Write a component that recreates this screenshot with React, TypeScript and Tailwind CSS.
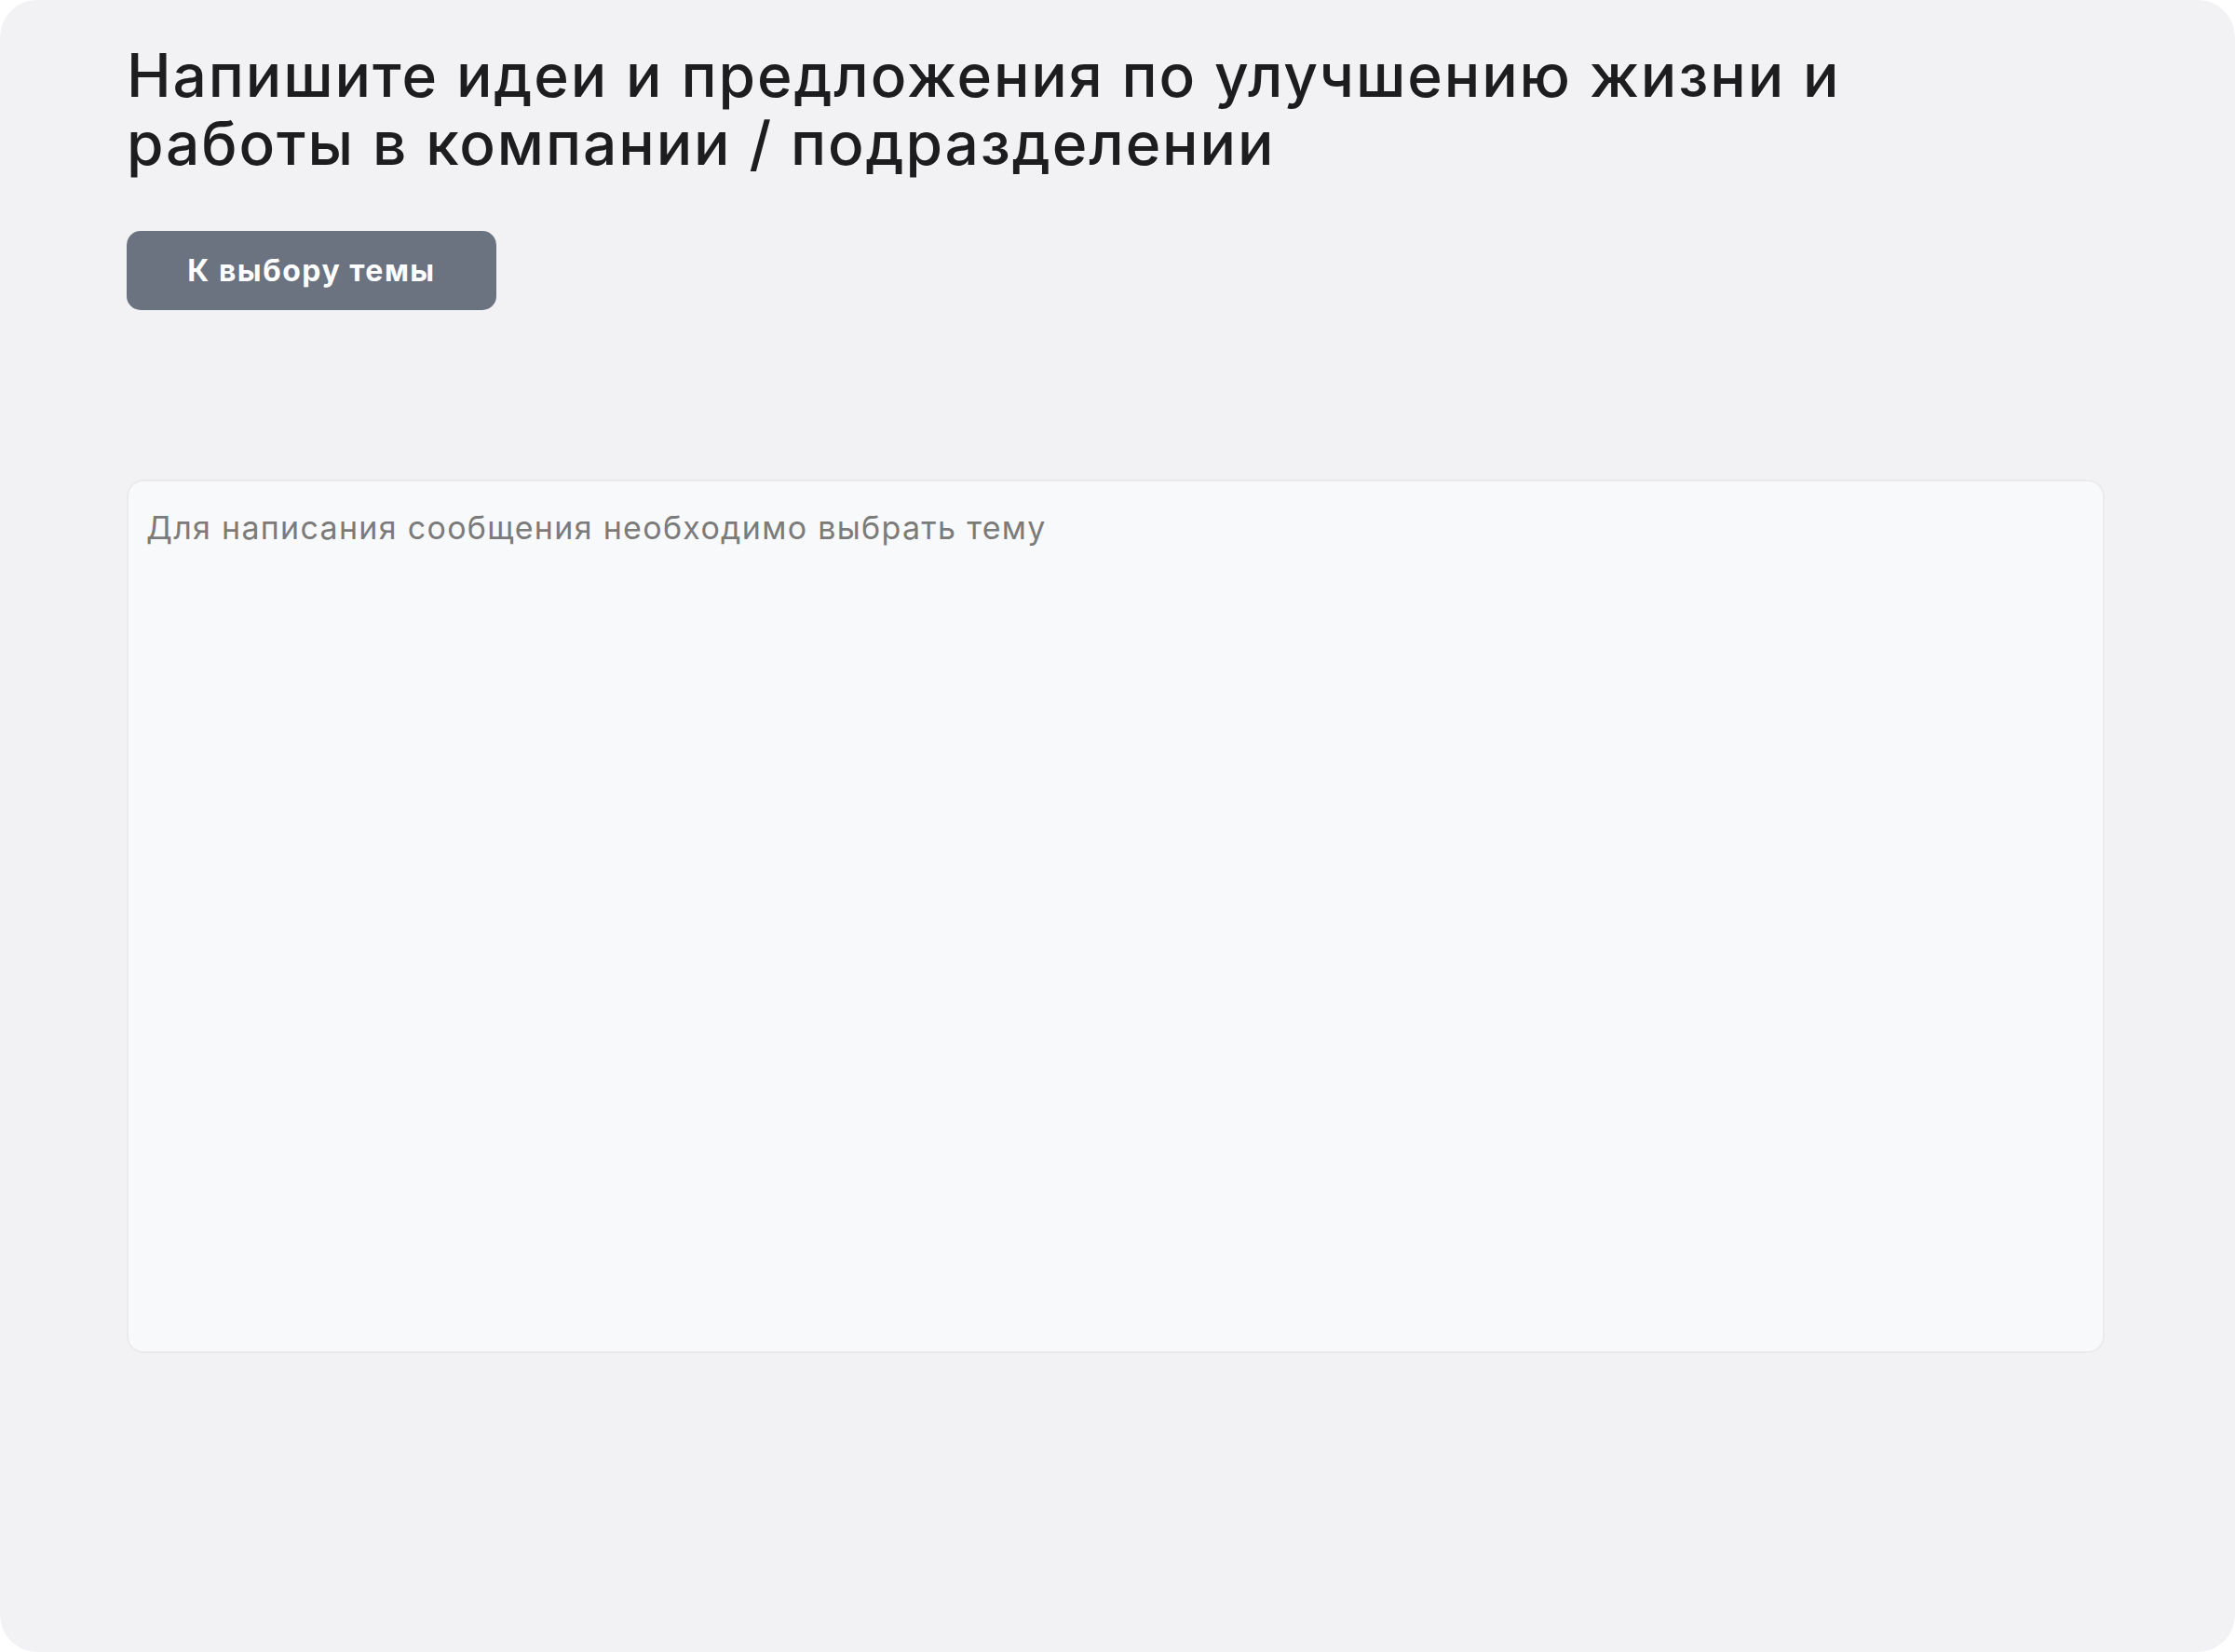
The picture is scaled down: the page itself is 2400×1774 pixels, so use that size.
import { useState } from 'react'

export default function App() {
  const [message, setMessage] = useState('')

  return (
    <div className="min-h-screen bg-white">
      <div
        className="h-[1774px] w-full rounded-[40px] bg-[#f2f2f4] pl-[136px] pr-[140px] pt-[44px]"
        style={{ fontFamily: 'Inter, "Noto Sans", sans-serif' }}
      >
        <h1 className="text-[64px] font-medium leading-[73px] tracking-[1.9px] text-[#1d1d1f]">
          Напишите идеи и предложения по улучшению жизни и
          <br />
          работы в компании / подразделении
        </h1>

        <button
          type="button"
          className="mt-[58px] flex h-[85px] w-[397px] items-center justify-center rounded-[15px] bg-[#6b7280] text-[32px] font-bold tracking-[1.5px] text-white"
        >
          К выбору темы
        </button>

        <textarea
          value={message}
          onChange={(e) => setMessage(e.target.value)}
          disabled
          placeholder="Для написания сообщения необходимо выбрать тему"
          className="mt-[182px] block h-[938px] w-full resize-none rounded-[18px] border-2 border-[#ebebed] bg-[#f8f9fa] px-[19px] pt-[24px] text-[34px] leading-[51px] tracking-[1.3px] text-[#1d1d1f] placeholder-[#7b7b7b] outline-none"
        />
      </div>
    </div>
  )
}
